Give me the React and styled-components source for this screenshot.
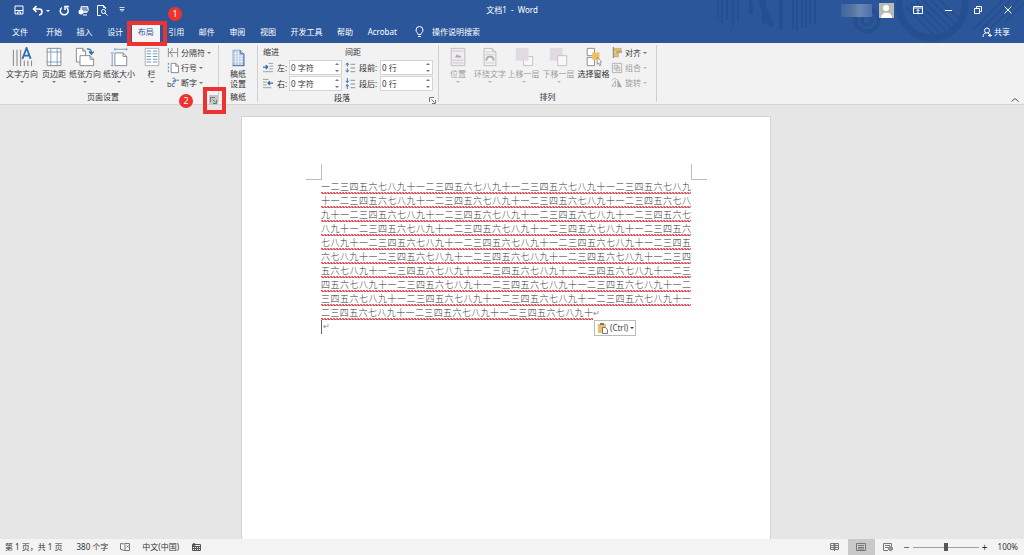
import React from 'react'
import styled, { createGlobalStyle, css } from 'styled-components'

const blue = '#2b579a'
const red = '#ee322f'

const GlobalStyle = createGlobalStyle`
  * { box-sizing: border-box; }
  body {
    margin: 0;
    font: 8px/10px "Noto Sans", "Noto Sans CJK SC", sans-serif;
    color: #333;
  }
  button, input {
    font: inherit;
    color: inherit;
    margin: 0;
    padding: 0;
    border: 0;
    background: none;
  }
  svg { display: block; flex: none; }
`

const Window = styled.div`
  display: flex;
  flex-direction: column;
  height: 100vh;
  background: #e6e6e6;
  white-space: nowrap;
`

/* header */

const Header = styled.header`
  position: relative;
  flex: none;
  background: ${blue};
  color: #fff;
`

const Pattern = styled.svg`
  position: absolute;
  top: 0;
  right: 0;
`

const TitleBar = styled.div`
  position: relative;
  display: grid;
  grid-template-columns: 1fr auto 1fr;
  align-items: center;
  height: 20px;
`

const QuickAccess = styled.div`
  display: flex;
  align-items: center;
  gap: 8px;
  padding-left: 13px;
`

const IconButton = styled.button`
  display: flex;
  align-items: center;
  justify-content: center;
  min-width: 11px;
  height: 12px;
`

const WindowControls = styled.div`
  display: flex;
  justify-content: flex-end;
  align-items: center;
  gap: 19px;
  padding-right: 11px;
`

const Account = styled.div`
  display: flex;
  align-items: center;
  gap: 7px;
  margin-right: -1px;
`

const BlurredName = styled.div`
  width: 31px;
  height: 13px;
  background: linear-gradient(90deg, #3c65a3, #58779f 40%, #6c87b5 60%, #4c70ab);
`

const TabBar = styled.div`
  position: relative;
  display: flex;
  align-items: center;
  height: 23px;
  padding: 1px 14px 0 6px;
`

const Tabs = styled.nav`
  display: flex;
  justify-content: space-between;
  width: 363px;
  margin-left: 6px;
`

const Tab = styled.button`
  position: relative;
  height: 20px;
  padding: 0 6px;
  ${({ $active }) => $active && css`
    background: #f4f4f4;
    color: ${blue};
  `}
`

const TellMe = styled.button`
  display: flex;
  align-items: center;
  gap: 8px;
  margin-left: 12px;
`

const Share = styled.button`
  display: flex;
  align-items: center;
  gap: 2px;
  margin-left: auto;
`

const Frame = styled.span`
  position: absolute;
  z-index: 2;
  inset: ${({ $inset }) => $inset};
  border: 4px solid ${red};
  pointer-events: none;
`

const Badge = styled.span`
  position: absolute;
  z-index: 3;
  left: ${({ $left }) => $left}px;
  top: ${({ $top }) => $top}px;
  width: 14px;
  height: 14px;
  border-radius: 50%;
  background: ${red};
  color: #fff;
  font-size: 9px;
  line-height: 14px;
  text-align: center;
`

/* ribbon */

const Ribbon = styled.div`
  display: flex;
  position: relative;
  flex: none;
  height: 62px;
  padding: 2px 0;
  background: #f2f2f2;
  border-bottom: 1px solid #d5d5d5;
`

const Group = styled.section`
  position: relative;
  display: flex;
  flex-direction: column;
  width: ${({ $width }) => $width}px;
  border-right: 1px solid #cfcfcf;
`

const GroupBody = styled.div`
  display: grid;
  grid-template-columns: ${({ $columns }) => $columns};
  height: 47px;
  padding-left: ${({ $indent = 3 }) => $indent}px;
`

const GroupLabel = styled.div`
  padding: 2px 12px 0 0;
  text-align: center;
  ${({ $plain }) => $plain && css`
    padding-right: 0;
  `}
`

const Launcher = styled.button`
  position: absolute;
  right: ${({ $active }) => ($active ? 0 : 1)}px;
  bottom: -3px;
  display: grid;
  place-items: center;
  width: 9px;
  height: 10px;
  ${({ $active }) => $active && css`
    background: #c6c6c6;
  `}
`

const BigButton = styled.button`
  display: flex;
  flex-direction: column;
  align-items: center;
  gap: 2px;
  padding-top: 2px;
  opacity: ${({ disabled }) => (disabled ? 0.45 : 1)};
`

const BigIcon = styled.svg`
  width: 26px;
  height: 20px;
`

const SmallColumn = styled.div`
  display: grid;
  grid-template-rows: repeat(3, 15px);
`

const SmallButton = styled.button`
  display: flex;
  align-items: center;
  gap: 2px;
  opacity: ${({ disabled }) => (disabled ? 0.45 : 1)};
`

const Caret = styled.i`
  border: 2px solid transparent;
  border-top-color: #777;
  border-bottom: 0;
`

const Fields = styled.div`
  display: grid;
  grid-template-rows: 12px 15px 15px;
  row-gap: 1px;
  padding: 2px 1px 0 0;
`

const Field = styled.label`
  display: grid;
  grid-template-columns: 14px ${({ $wide }) => ($wide ? 21 : 12)}px 53px;
  align-items: center;
`

const Spinner = styled.span`
  display: flex;
  height: 15px;
  border: 1px solid #d4d4d4;
  background: #fff;

  input {
    flex: 1;
    min-width: 0;
    padding-left: 1px;
    outline: 0;
  }
`

const Steps = styled.span`
  display: flex;
  flex-direction: column;
  justify-content: space-around;
  width: 9px;

  button {
    display: flex;
    justify-content: center;
  }
  button:first-child i { transform: rotate(180deg); }
`

const Collapse = styled.button`
  margin: auto 5px 0 auto;
`

/* document */

const Workspace = styled.main`
  flex: 1;
  min-height: 0;
  padding: 11px 12px 0 0;
  overflow: hidden;
`

const Page = styled.article`
  width: 530px;
  max-width: 100%;
  height: 100%;
  margin: 0 auto;
  padding: 47px 79px 0;
  background: #fff;
  border: 1px solid #d4d4d4;
  border-bottom: 0;
`

const Margins = styled.div`
  display: flex;
  justify-content: space-between;
  margin: 0 -16px 0 -15px;

  span {
    width: 16px;
    height: 16px;
    border: solid #bdbdbd;
    border-width: 0 1px 1px 0;
  }
  span:last-child { border-width: 0 0 1px 1px; }
`

const Line = styled.p`
  position: relative;
  width: ${({ $last }) => ($last ? '272px' : 'auto')};
  margin: 0;
  padding-bottom: 1px;
  font-family: "Noto Sans CJK SC", sans-serif;
  font-weight: 300;
  font-size: 9px;
  line-height: 13px;
  text-align-last: justify;
  color: #333;
  background:
    repeating-linear-gradient(90deg, #e2606a 0 2px, transparent 2px 3px) left bottom 1px / 100% 1px no-repeat,
    repeating-linear-gradient(90deg, #f3b0b4 0 1px, #df4450 1px 3px) left bottom / 100% 1px no-repeat;
`

const Return = styled.span`
  position: absolute;
  left: 100%;
  top: 0;
  color: #888;
  font-size: 8px;
`

const CaretLine = styled.div`
  display: flex;
  position: relative;
  height: 14px;
  padding-left: 1px;
  border-left: 1px solid #666;
  color: #888;
  font-size: 8px;
  line-height: 12px;
`

const PasteButton = styled.button`
  position: absolute;
  left: 272px;
  top: 0;
  display: flex;
  align-items: center;
  gap: 2px;
  height: 16px;
  padding: 0 1px 0 2px;
  border: 1px solid #bbb;
  background: #fff;
  color: #444;

  i { border-top-color: #444; }
`

/* status bar */

const StatusBar = styled.footer`
  display: flex;
  flex: none;
  align-items: center;
  height: 16px;
  padding: 0 6px 0 5px;
  background: #f3f3f3;
`

const StatusItem = styled.span`
  margin-right: ${({ $gap = 12 }) => $gap}px;
`

const Views = styled.div`
  display: flex;
  align-self: stretch;
  margin-left: auto;
`

const ViewButton = styled.button`
  display: grid;
  place-items: center;
  width: 27px;
  background: ${({ $active }) => ($active ? '#c9c9c9' : 'none')};
`

const Zoom = styled.div`
  display: flex;
  align-items: center;
  gap: 3px;
  margin: 0 10px 0 2px;

  button {
    width: 6px;
    font-size: 10px;
  }
`

const Range = styled.input`
  appearance: none;
  width: 66px;
  height: 9px;
  background: linear-gradient(#a0a0a0, #a0a0a0) center / 100% 1px no-repeat;

  &::-webkit-slider-thumb {
    appearance: none;
    width: 4px;
    height: 8px;
    background: #555;
  }
`

const HeaderPattern = () => (
  <Pattern width="324" height="43" viewBox="0 0 324 43" fill="none" stroke="#264f8f">
    <path strokeWidth="2" d="M18 0v18M22 0v23M27 0v20M33 0v26M38 0v21M93 0v29M97 0v31M102 0v28M106 0v28M110 0v25M115 0v24" />
    <path strokeWidth="4" d="M51 0v14M64 0v24M81 0v30" />
    <path strokeWidth="5" d="M60 0 72 27" />
    <circle cx="167" cy="20" r="11.500" strokeWidth="4" />
    <circle cx="167" cy="20" r="5" strokeWidth="3" />
    <circle cx="232" cy="5" r="33" strokeWidth="7" />
    <path strokeWidth="2" d="M206 7 234 35M210 3l30 30M216 1l30 30M223 0l29 29M231 0l25 25M240 0l20 20M273 30 303 0M280 31 311 0M290 29 319 0M305 22 324 3" />
  </Pattern>
)

const page = { fill: '#fff', stroke: '#858585' }

const bigIcons = {
  direction: (
    <>
      <path d="M3.500 3v18M7.500 3v18M11.500 3v18M15.500 15v6M19.500 15v6M23.500 15v6" stroke="#777" />
      <path d="m13.500 13 4.500-12 4.500 12M15 9.500h6" fill="none" stroke="#2f6db0" strokeWidth="2" />
    </>
  ),
  margins: (
    <>
      <path {...page} d="M5.500 1.500h15v19h-15z" />
      <path d="M9.500 1v20M16.500 1v20M5 5.500h16M5 16.500h16" stroke="#6d9cc7" />
    </>
  ),
  orientation: (
    <>
      <path {...page} d="M3.500 1.500h7l3 3v12h-10zM10.500 1.500v3h3" />
      <path {...page} d="M7.500 9.500h11l4 4v7h-15zM18.500 9.500v4h4" />
      <path d="M15 2c4 0 5 1 5 5m-2.500-2L20 8l2.500-3" fill="none" stroke="#2f6db0" strokeWidth="1.500" />
    </>
  ),
  size: (
    <>
      <path {...page} d="M8.500 6.500h9l4 4v10h-13zM17.500 6.500v4h4" />
      <path d="M8 2.500h14M8.500 1v3M21.500 1v3M5.500 7v14M4 6.500h3M4 20.500h3" stroke="#6d9cc7" fill="none" />
    </>
  ),
  columns: (
    <>
      <path {...page} stroke="#aaa" d="M5.500 1.500h15v19h-15z" />
      <path d="M7 4.500h5M14 4.500h5M7 7.500h5M14 7.500h5M7 10.500h5M14 10.500h5M7 13.500h5M14 13.500h5M7 16.500h5M14 16.500h5" stroke="#5c8fbd" />
    </>
  ),
  manuscript: (
    <>
      <path d="M7.500 3.500h8l4 4v13h-12z" fill="#b9cce6" stroke="#8fa2c0" />
      <path d="M8 7h7M8 10h11M8 13h11M8 16h11M10.500 4v16M13.500 4v16M16.500 8v12" stroke="#e6eef8" />
      <path d="M15.500 3.500v4h4M7 20.500h13M19.500 8v13" fill="none" stroke="#4b6fa8" />
    </>
  ),
  position: (
    <>
      <path d="M5.500 1.500h15v19h-15z" fill="#eee6ee" stroke="#777" />
      <path d="M7 4.500h12M7 14.500h12M7 17.500h12" stroke="#999" />
      <path d="M9.500 11.500 12 8l2 2 1-1 2 2.500z" fill="#555" />
    </>
  ),
  wrap: (
    <>
      <path d="M6.500 1.500h9l4 4v15h-13zM15.500 1.500v4h4" fill="#f7f3f7" stroke="#777" />
      <path d="M8 5.500h6M8 8.500h10M8 17.500h10" stroke="#999" />
      <path d="M9 15c0-6 8-6 8 0" fill="none" stroke="#555" strokeWidth="2" />
    </>
  ),
  forward: (
    <>
      <path d="M12.500 10.500h10v10h-10z" {...page} />
      <path d="M4 1h14v14H4z" fill="#cdbfcd" />
    </>
  ),
  backward: (
    <>
      <path d="M3 1h14v14H3z" fill="#cdbfcd" />
      <path d="M11.500 9.500h10v11h-10z" {...page} />
    </>
  ),
  selection: (
    <>
      <path d="M5.500 1.500h8v8h-8zM5.500 11.500h8v9h-8z" fill="#fff" stroke="#888" />
      <path d="M11 6h8v8h-8z" fill="#efc15b" />
      <path d="m16.500 11.500 5 5-2 .5 1 3-1.500.5-1-3-1.500 1.500z" fill="#fff" stroke="#777" strokeWidth=".8" />
    </>
  ),
}

const smallIcons = {
  breaks: <path d="M1.500 1v10M2 6h9M5 3.500 3 6l2 2.500M5.500 1v3M5.500 8v3M11.500 1v10" stroke="#888" fill="none" />,
  numbers: (
    <>
      <path d="M1.500 1v2m0 2v2m0 2v2" stroke="#3b78b5" />
      <path d="M4.500 1.500h5l3 3v7h-8zM9.500 1.500v3h3" {...page} />
    </>
  ),
  align: (
    <>
      <path d="M2.500 0v12" stroke="#3b78b5" />
      <path d="M3 1.500h8v3H3zM3 6.500h5v4H3z" fill="#efc15b" stroke="#b98c35" strokeWidth=".6" />
      <path d="M6 5.500h6" stroke="#3b78b5" />
    </>
  ),
  group: <path d="M1.500 1.500h10v10h-10zM3.500 3.500h4v4h-4zM5.500 5.500h4v4h-4z" fill="none" stroke="#666" />,
  rotate: (
    <>
      <path d="M1 10 5 4v6zM1 4c1-3 4-3 5-1" fill="none" stroke="#666" />
      <path d="M7 2v9h5z" fill="#555" />
    </>
  ),
  indentLeft: (
    <>
      <path d="M6 1.500h5M7 4.500h4M7 7.500h4M0 10.500h11" stroke="#999" />
      <path d="M0 5.500h5M3 3.500l2 2-2 2" fill="none" stroke="#2f6db0" strokeWidth="1.500" />
    </>
  ),
  indentRight: (
    <>
      <path d="M0 1.500h6M0 4.500h4M0 7.500h4M0 10.500h9" stroke="#999" />
      <path d="M5 5.500h6M7.500 3.500l-2 2 2 2" fill="none" stroke="#2f6db0" strokeWidth="1.500" />
    </>
  ),
  before: (
    <>
      <path d="M6 2.500h5M6 6.500h5M6 10.500h5" stroke="#888" />
      <path d="M2.500 1v4M1 3l1.500-2L4 3M2.500 7v4M1 9l1.500 2L4 9" fill="none" stroke="#2f6db0" />
    </>
  ),
  after: (
    <>
      <path d="M6 2.500h5M6 6.500h5M6 10.500h5" stroke="#888" />
      <path d="M2.500 0v5M1 3l1.500 2L4 3M2.500 7v5M1 9l1.500-2L4 9" fill="none" stroke="#2f6db0" />
    </>
  ),
}

const Small = ({ name }) => (
  <svg width="12" height="12" viewBox="0 0 13 13">
    {name === 'hyphen' ? (
      <>
        <text x="0" y="11" fontSize="8" fill="#444">bc</text>
        <path d="M6 1.500c3-1 3 1 3 4M9 3.500c-3 0-3 2-1 2l1-1M10 3.500h3" fill="none" stroke="#2f6db0" />
      </>
    ) : smallIcons[name]}
  </svg>
)

const Big = ({ icon, label, disabled, noCaret }) => (
  <BigButton disabled={disabled}>
    <BigIcon viewBox="0 0 26 22">{bigIcons[icon]}</BigIcon>
    <span>{label}</span>
    {!noCaret && <Caret />}
  </BigButton>
)

const LaunchIcon = () => (
  <svg width="7" height="7" viewBox="0 0 7 7" fill="none" stroke="#777">
    <path d="M.5 5V.5H5M2.500 2.500l3 3M6.500 3v3.500H3" />
  </svg>
)

const SpinField = ({ icon, label, value, wide }) => (
  <Field $wide={wide}>
    <Small name={icon} />
    <span>{label}</span>
    <Spinner>
      <input defaultValue={value} aria-label={label} />
      <Steps>
        <button aria-label="增加"><Caret /></button>
        <button aria-label="减少"><Caret /></button>
      </Steps>
    </Spinner>
  </Field>
)

const tabs = ['开始', '插入', '设计', '布局', '引用', '邮件', '审阅', '视图', '开发工具', '帮助', 'Acrobat']

const digits = '一二三四五六七八九十'
const text = digits.repeat(38)
const perLine = 39
const lines = Array.from({ length: Math.ceil(text.length / perLine) }, (_, i) =>
  text.slice(i * perLine, (i + 1) * perLine)
)

const TopBar = () => (
  <Header>
    <HeaderPattern />
    <TitleBar>
      <QuickAccess>
        <IconButton aria-label="保存">
          <svg width="10" height="10" viewBox="0 0 10 10" fill="none" stroke="#fff">
            <path d="M1 1h8v8H1zM1 5.500h8M3.500 9V7h3v2" />
          </svg>
        </IconButton>
        <IconButton aria-label="撤消">
          <svg width="19" height="11" viewBox="0 0 19 11" fill="none" stroke="#fff" strokeWidth="1.600">
            <path d="M4.500 1 1.500 4l3 3M2 4h5c4 0 4 5 0 6" />
            <path d="M14 5h4l-2 2z" fill="#fff" stroke="none" />
          </svg>
        </IconButton>
        <IconButton aria-label="重复">
          <svg width="11" height="11" viewBox="0 0 11 11" fill="none" stroke="#fff" strokeWidth="1.500">
            <path d="M7.500 2.500a4 4 0 1 1-4.500 0M6 5V1.500h4" />
          </svg>
        </IconButton>
        <IconButton aria-label="表情">
          <svg width="11" height="11" viewBox="0 0 11 11">
            <path d="M3 1h7l1 4-2 3H4L2 4z" fill="#d8e0ec" />
            <path d="M4 3h5M4 5h6" stroke={blue} />
            <circle cx="3" cy="7" r="2.500" fill="#fff" />
            <path d="M5 10h4" stroke="#fff" />
          </svg>
        </IconButton>
        <IconButton aria-label="打印预览">
          <svg width="11" height="11" viewBox="0 0 11 11" fill="none" stroke="#fff">
            <path d="M4 10.500H.5V.5h6l2 2V4M6.500.5v2h2" />
            <circle cx="6.500" cy="6.500" r="2" />
            <path d="m8 8 2.500 2.500" />
          </svg>
        </IconButton>
        <IconButton aria-label="自定义">
          <svg width="6" height="6" viewBox="0 0 6 6" fill="none" stroke="#fff">
            <path d="M.5.5h5M1 2.500h4l-2 2z" strokeWidth=".8" />
          </svg>
        </IconButton>
      </QuickAccess>
      <span>文档1&nbsp; - &nbsp;Word</span>
      <WindowControls>
        <Account>
          <BlurredName />
          <svg width="15" height="15" viewBox="0 0 15 15">
            <path d="M0 0h15v15H0z" fill="#b9bcb4" />
            <circle cx="7" cy="5" r="3" fill="#fff" />
            <path d="M2 15c0-7 11-7 11 0z" fill="#fff" />
          </svg>
        </Account>
        <IconButton aria-label="功能区显示选项">
          <svg width="10" height="8" viewBox="0 0 10 8" fill="none" stroke="#fff">
            <path d="M.5.5h9v7h-9zM.5 2h9M5 7V3.500M3.500 5 5 3.500 6.500 5" />
          </svg>
        </IconButton>
        <IconButton aria-label="最小化">
          <svg width="8" height="8" viewBox="0 0 8 8" stroke="#fff"><path d="M1 4.500h7" /></svg>
        </IconButton>
        <IconButton aria-label="还原">
          <svg width="8" height="8" viewBox="0 0 8 8" fill="none" stroke="#fff">
            <path d="M.5 2.500h5v5h-5zM2.500 2V.5h5v5H6" />
          </svg>
        </IconButton>
        <IconButton aria-label="关闭">
          <svg width="8" height="8" viewBox="0 0 8 8" stroke="#fff"><path d="m.5.5 7 7m0-7-7 7" /></svg>
        </IconButton>
      </WindowControls>
    </TitleBar>
    <TabBar>
      <Tab>文件</Tab>
      <Tabs>
        {tabs.map(tab => (
          <Tab key={tab} $active={tab === '布局'}>
            {tab}
            {tab === '布局' && <Frame $inset="-1px -7px -4px -5px" />}
          </Tab>
        ))}
      </Tabs>
      <TellMe>
        <svg width="9" height="12" viewBox="0 0 9 12" fill="none" stroke="#fff">
          <path d="M3 8.500C3 6.500 1 6.500 1 4a3.500 3.500 0 0 1 7 0c0 2.500-2 2.500-2 4.500zM3 10.500h3" />
        </svg>
        操作说明搜索
      </TellMe>
      <Share>
        <svg width="10" height="10" viewBox="0 0 10 10" fill="none" stroke="#fff">
          <circle cx="5" cy="3.500" r="2.500" />
          <path d="M1 10c0-2 1-4 3-4M6 6l2 2M6 8.500h4M8 6.500v4" />
        </svg>
        共享
      </Share>
    </TabBar>
    <Badge $left={168} $top={7}>1</Badge>
  </Header>
)

const LayoutRibbon = () => (
  <Ribbon>
    <Group $width={219}>
      <GroupBody $columns="36px 28px 34px 34px 31px 1fr" $indent={4}>
        <Big icon="direction" label="文字方向" />
        <Big icon="margins" label="页边距" />
        <Big icon="orientation" label="纸张方向" />
        <Big icon="size" label="纸张大小" />
        <Big icon="columns" label="栏" />
        <SmallColumn>
          <SmallButton><Small name="breaks" />分隔符<Caret /></SmallButton>
          <SmallButton><Small name="numbers" />行号<Caret /></SmallButton>
          <SmallButton><Small name="hyphen" />断字<Caret /></SmallButton>
        </SmallColumn>
      </GroupBody>
      <GroupLabel>页面设置</GroupLabel>
      <Launcher $active aria-label="页面设置">
        <LaunchIcon />
        <Frame $inset="-8px -8px -9px -6px" />
      </Launcher>
    </Group>
    <Group $width={39}>
      <GroupBody $columns="1fr" $indent={0}>
        <Big icon="manuscript" label={<>稿纸<br />设置</>} noCaret />
      </GroupBody>
      <GroupLabel $plain>稿纸</GroupLabel>
    </Group>
    <Group $width={181}>
      <GroupBody $columns="82px 1fr" $indent={5}>
        <Fields>
          <span>缩进</span>
          <SpinField icon="indentLeft" label="左:" value="0 字符" />
          <SpinField icon="indentRight" label="右:" value="0 字符" />
        </Fields>
        <Fields>
          <span>间距</span>
          <SpinField icon="before" label="段前:" value="0 行" wide />
          <SpinField icon="after" label="段后:" value="0 行" wide />
        </Fields>
      </GroupBody>
      <GroupLabel>段落</GroupLabel>
      <Launcher aria-label="段落设置"><LaunchIcon /></Launcher>
    </Group>
    <Group $width={218}>
      <GroupBody $columns="32px 32px 35px 35px 35px 1fr">
        <Big icon="position" label="位置" disabled />
        <Big icon="wrap" label="环绕文字" disabled />
        <Big icon="forward" label="上移一层" disabled />
        <Big icon="backward" label="下移一层" disabled />
        <Big icon="selection" label="选择窗格" noCaret />
        <SmallColumn>
          <SmallButton><Small name="align" />对齐<Caret /></SmallButton>
          <SmallButton disabled><Small name="group" />组合<Caret /></SmallButton>
          <SmallButton disabled><Small name="rotate" />旋转<Caret /></SmallButton>
        </SmallColumn>
      </GroupBody>
      <GroupLabel $plain>排列</GroupLabel>
    </Group>
    <Collapse aria-label="折叠功能区">
      <svg width="8" height="5" viewBox="0 0 8 5" fill="none" stroke="#555"><path d="m.5 4.500 3.500-3 3.500 3" /></svg>
    </Collapse>
    <Badge $left={179} $top={51}>2</Badge>
  </Ribbon>
)

const Status = () => (
  <StatusBar>
    <StatusItem $gap={14}>第 1 页，共 1 页</StatusItem>
    <StatusItem>380 个字</StatusItem>
    <StatusItem>
      <svg width="10" height="8" viewBox="0 0 10 8" fill="none" stroke="#777">
        <path d="M5 1.500v6M5 1 .5.5v6L5 7.500h4.500V.5H5M6.500 2.500l2 2m0-2-2 2" />
      </svg>
    </StatusItem>
    <StatusItem $gap={13}>中文(中国)</StatusItem>
    <svg width="9" height="8" viewBox="0 0 9 8" fill="none" stroke="#555">
      <path d="M.5 1.500h8v6h-8zM1 3.500h7M1 5.500h7M2.500 3v4M4.500 3v4M6.500 3v4" />
      <circle cx="2" cy="1.500" r="1.500" fill="#555" stroke="none" />
    </svg>
    <Views>
      <ViewButton aria-label="阅读视图">
        <svg width="9" height="8" viewBox="0 0 9 8" fill="none" stroke="#777">
          <path d="M.5.5h3.500v6H.5zM5 .5h3.500v6H5zM1 2.500h3M1 4.500h3M5 2.500h3M5 4.500h3M4.500 0v8" />
        </svg>
      </ViewButton>
      <ViewButton $active aria-label="页面视图">
        <svg width="10" height="8" viewBox="0 0 10 8" fill="none" stroke="#777">
          <path d="M.5.5h9v7h-9zM2 2.500h6M2 4.500h6M2 6h6" />
        </svg>
      </ViewButton>
      <ViewButton aria-label="Web 版式视图">
        <svg width="10" height="8" viewBox="0 0 10 8" fill="none" stroke="#777">
          <path d="M5 7.500H.5v-7h8V3M2 2.500h5M2 4.500h3" />
          <circle cx="7.500" cy="5.500" r="2" fill="#999" />
        </svg>
      </ViewButton>
    </Views>
    <Zoom>
      <button aria-label="缩小">−</button>
      <Range type="range" defaultValue="50" aria-label="显示比例" />
      <button aria-label="放大">+</button>
    </Zoom>
    <span>100%</span>
  </StatusBar>
)

const App = () => (
  <Window>
    <GlobalStyle />
    <TopBar />
    <LayoutRibbon />
    <Workspace>
      <Page>
        <Margins><span /><span /></Margins>
        {lines.map((line, i) => (
          <Line key={i} $last={i === lines.length - 1}>
            {line}
            {i === lines.length - 1 && <Return>↵</Return>}
          </Line>
        ))}
        <CaretLine>
          ↵
          <PasteButton>
            <svg width="11" height="12" viewBox="0 0 11 12">
              <path d="M1 2h8v9H1z" fill="#e9bd6c" />
              <path d="M3 1h4v2H3z" fill="#777" />
              <path d="M5.500 5.500h3l2 2v4h-5z" fill="#fff" stroke="#777" />
            </svg>
            (Ctrl)
            <Caret />
          </PasteButton>
        </CaretLine>
      </Page>
    </Workspace>
    <Status />
  </Window>
)

export default App
